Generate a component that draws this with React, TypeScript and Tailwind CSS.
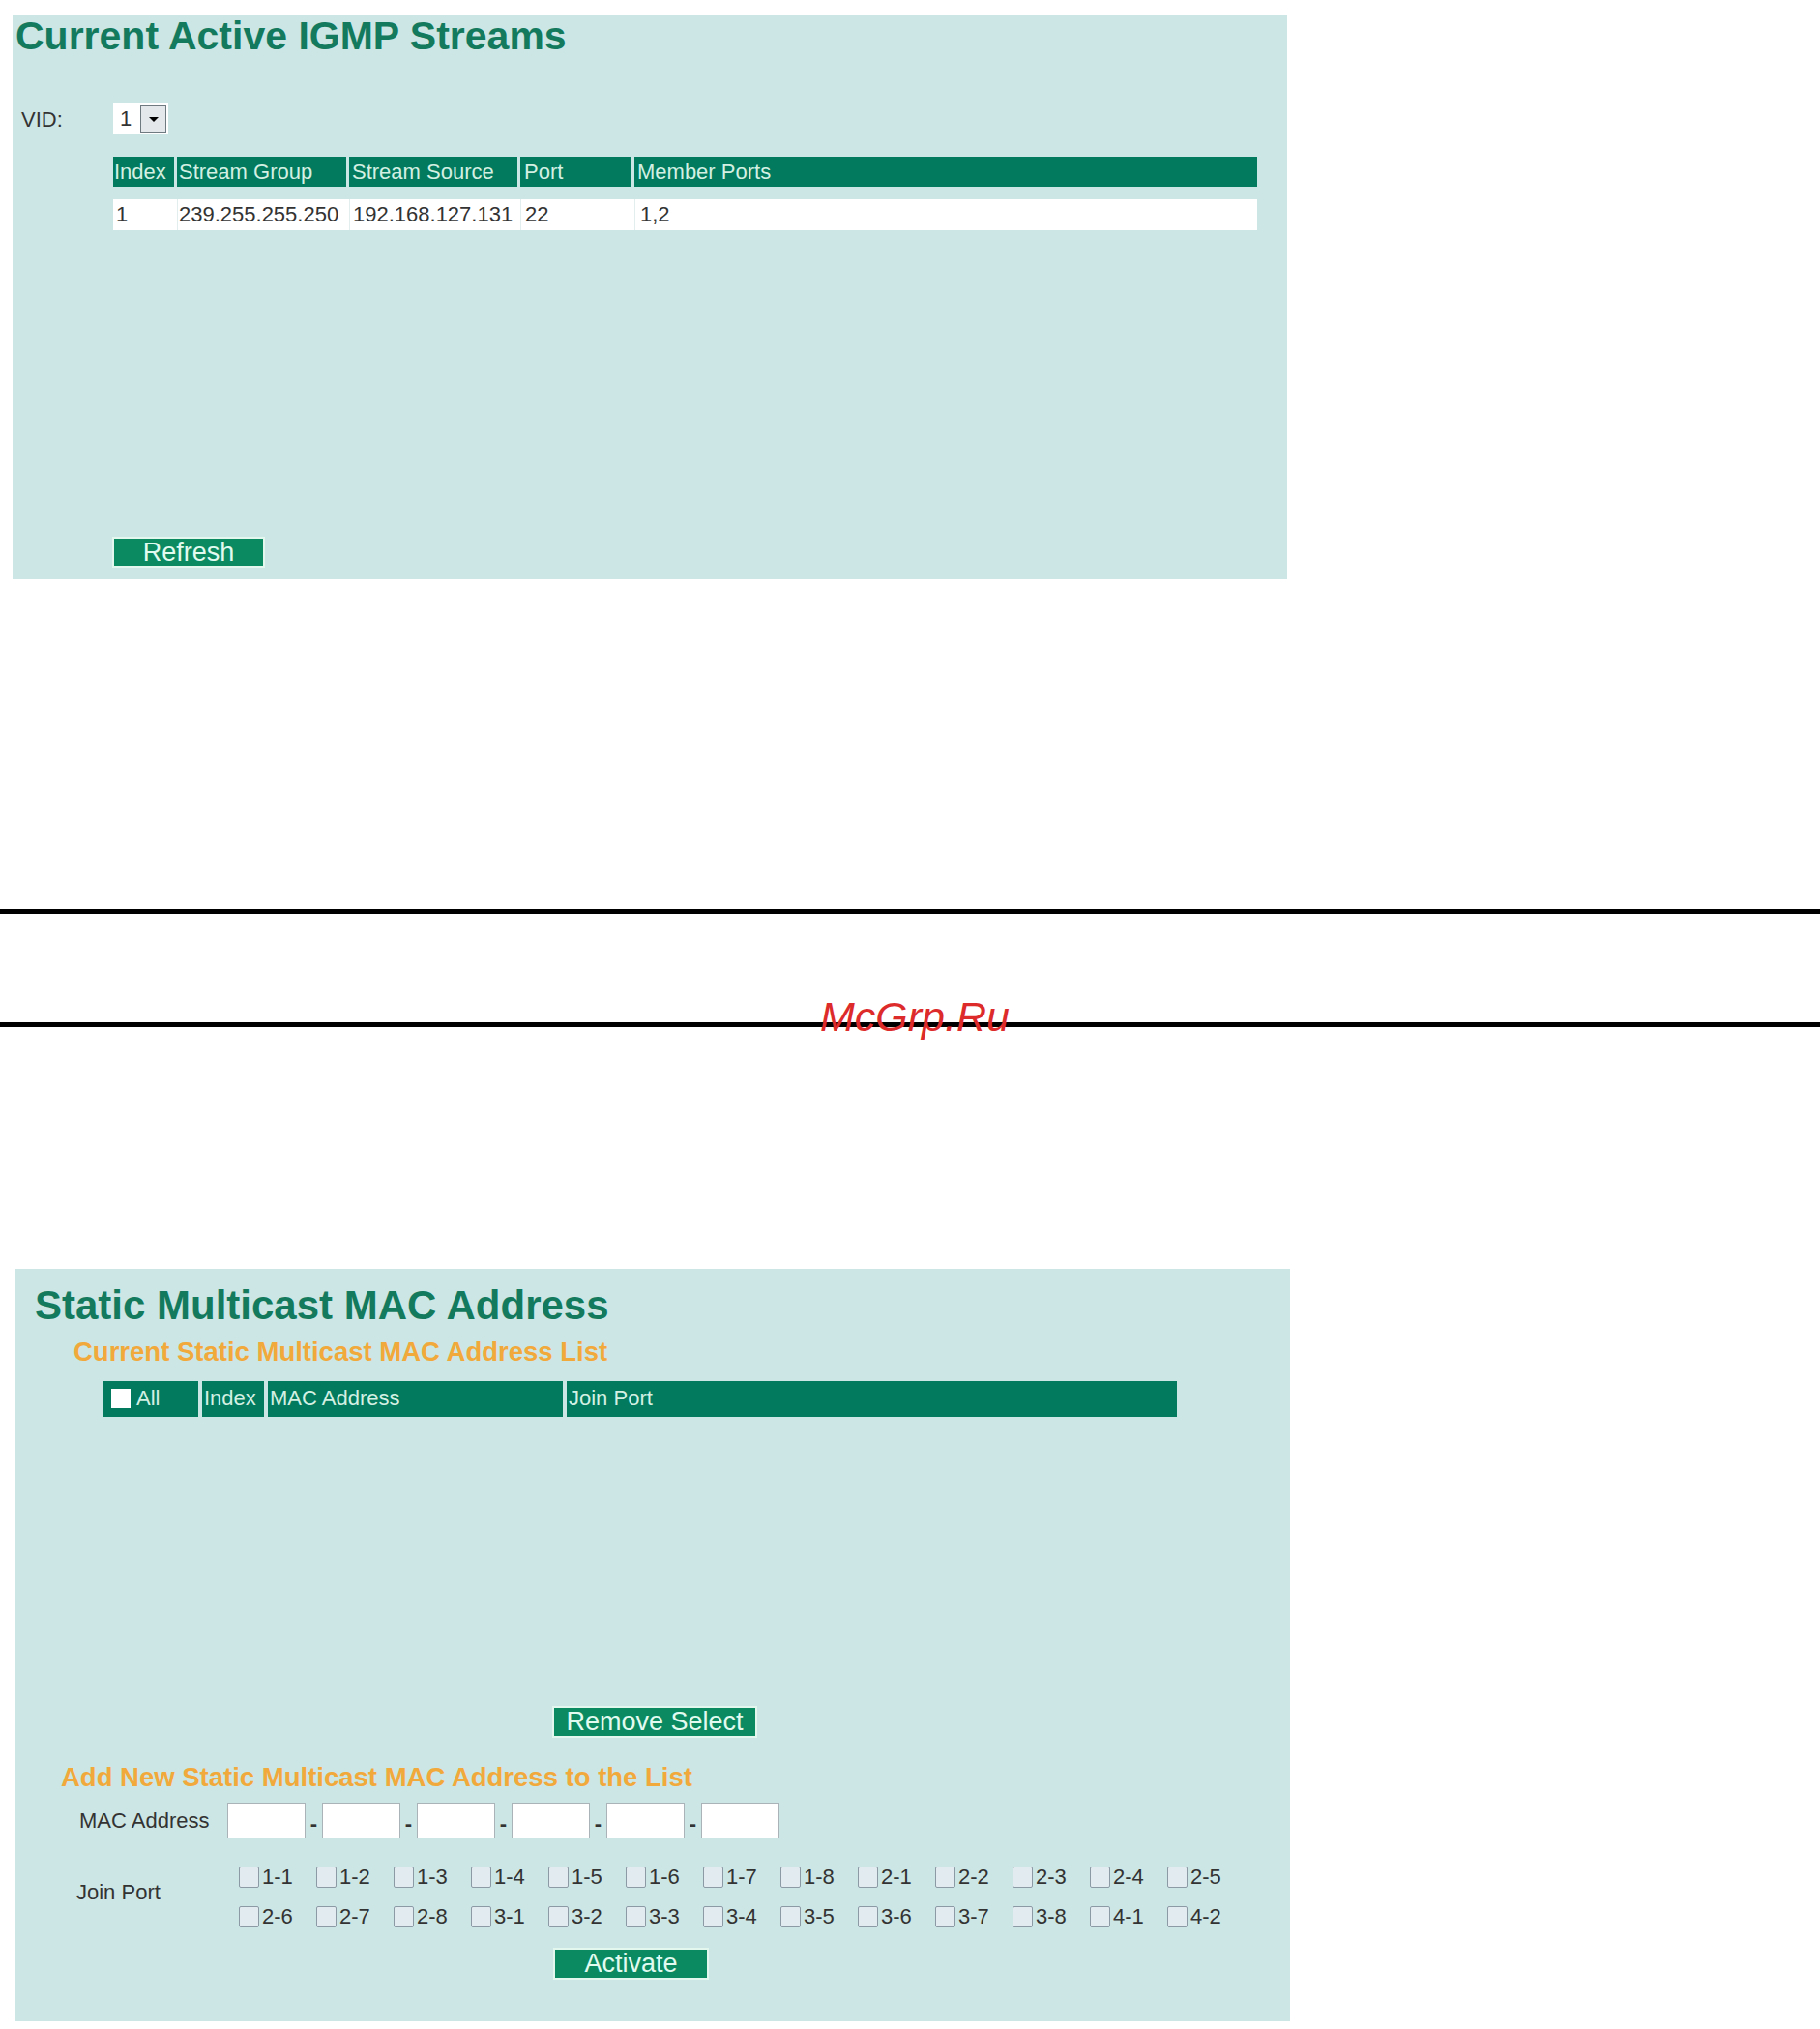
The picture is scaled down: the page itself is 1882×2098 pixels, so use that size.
const ports1 = ["1-1", "1-2", "1-3", "1-4", "1-5", "1-6", "1-7", "1-8", "2-1", "2-2", "2-3", "2-4", "2-5"];
const ports2 = ["2-6", "2-7", "2-8", "3-1", "3-2", "3-3", "3-4", "3-5", "3-6", "3-7", "3-8", "4-1", "4-2"];

function GreenButton({ label, className }: { label: string; className: string }) {
  return (
    <div
      className={
        "flex items-center justify-center bg-[#0b8a62] border-2 border-[#e4f7ef] text-[#e2fbf0] text-[27px] leading-none " +
        className
      }
    >
      {label}
    </div>
  );
}

function PortBox({ name }: { name: string }) {
  return (
    <div className="flex w-[80px] items-center gap-[3px]">
      <div className="h-[22px] w-[21px] rounded-[2px] border border-[#8c9aa6] bg-[#e2ebef]" />
      <span className="text-[22px] leading-none text-[#333]">{name}</span>
    </div>
  );
}

export default function App() {
  return (
    <div className="relative h-[2098px] w-[1882px] overflow-hidden bg-white font-['Liberation_Sans',Arial,sans-serif]">
      {/* Current Active IGMP Streams */}
      <div className="ml-[13px] mt-[15px] flex h-[584px] w-[1318px] flex-col bg-[#cce6e5]">
        <h1 className="ml-[3px] mt-[2px] text-[41px] font-bold leading-none text-[#137a5e]">
          Current Active IGMP Streams
        </h1>
        <div className="mt-[49px] flex h-[32px] items-center">
          <span className="w-[104px] pl-[9px] text-[22px] text-[#333]">VID:</span>
          <div className="flex h-[32px] w-[57px] items-center bg-white">
            <span className="w-[28px] pl-[7px] text-[22px] leading-none text-[#333]">1</span>
            <div className="flex h-[29px] w-[27px] items-center justify-center border border-[#6f7a80] bg-[#e4e8ea]">
              <div className="h-0 w-0 border-x-[5px] border-t-[5px] border-x-transparent border-t-black" />
            </div>
          </div>
        </div>
        <div className="ml-[104px] mt-[23px] w-[1183px] text-[22px] leading-none">
          <div className="flex h-[31px] gap-[3px] text-[#d3f0e3]">
            <div className="flex w-[63px] items-center bg-[#027a5d] pl-[1px]">Index</div>
            <div className="flex w-[175px] items-center bg-[#027a5d] pl-[2px]">Stream Group</div>
            <div className="flex w-[174px] items-center bg-[#027a5d] pl-[3px]">Stream Source</div>
            <div className="flex w-[115px] items-center bg-[#027a5d] pl-[4px]">Port</div>
            <div className="flex flex-1 items-center bg-[#027a5d] pl-[3px]">Member Ports</div>
          </div>
          <div className="mt-[13px] flex h-[32px] bg-white text-[#333]">
            <div className="flex w-[66px] items-center pl-[3px]">1</div>
            <div className="flex w-[178px] items-center border-l border-[#e2eeee] pl-[1px]">239.255.255.250</div>
            <div className="flex w-[177px] items-center border-l border-[#e2eeee] pl-[3px]">192.168.127.131</div>
            <div className="flex w-[118px] items-center border-l border-[#e2eeee] pl-[4px]">22</div>
            <div className="flex flex-1 items-center border-l border-[#e2eeee] pl-[5px]">1,2</div>
          </div>
        </div>
        <GreenButton label="Refresh" className="ml-[103px] mt-[317px] h-[32px] w-[158px]" />
      </div>

      {/* separator lines */}
      <div className="mt-[341px] h-[5px] w-full bg-black" />
      <div className="mt-[112px] h-[5px] w-full bg-black" />
      <span className="absolute left-[848px] top-[1030px] text-[43px] italic leading-none text-[#dd2a2a]">
        McGrp.Ru
      </span>

      {/* Static Multicast MAC Address */}
      <div className="ml-[16px] mt-[250px] flex h-[778px] w-[1318px] flex-col bg-[#cce6e5]">
        <h1 className="ml-[20px] mt-[17px] text-[42px] font-bold leading-none text-[#137a5e]">
          Static Multicast MAC Address
        </h1>
        <h2 className="ml-[60px] mt-[13px] text-[27.5px] font-bold leading-none text-[#f2a93b]">
          Current Static Multicast MAC Address List
        </h2>
        <div className="ml-[91px] mt-[16px] flex h-[37px] w-[1110px] gap-[4px] text-[22px] leading-none text-[#d3f0e3]">
          <div className="flex w-[98px] items-center gap-[6px] bg-[#027a5d] pl-[8px]">
            <div className="h-[20px] w-[20px] bg-white" />
            <span>All</span>
          </div>
          <div className="flex w-[64px] items-center bg-[#027a5d] pl-[2px]">Index</div>
          <div className="flex w-[305px] items-center bg-[#027a5d] pl-[2px]">MAC Address</div>
          <div className="flex flex-1 items-center bg-[#027a5d] pl-[2px]">Join Port</div>
        </div>
        <GreenButton label="Remove Select" className="ml-[555px] mt-[299px] h-[33px] w-[212px]" />
        <h2 className="ml-[47px] mt-[27px] text-[27.5px] font-bold leading-none text-[#f2a93b]">
          Add New Static Multicast MAC Address to the List
        </h2>
        <div className="ml-[66px] mt-[13px] flex h-[37px] items-center">
          <span className="w-[153px] text-[22px] text-[#333]">MAC Address</span>
          {[0, 1, 2, 3, 4, 5].map((i) => (
            <div key={i} className="flex items-center">
              <div className="h-[37px] w-[81px] border border-[#a9b3b8] bg-white" />
              {i < 5 && (
                <span className="flex w-[17px] justify-center pt-[6px] text-[22px] font-bold leading-none text-[#333]">
                  -
                </span>
              )}
            </div>
          ))}
        </div>
        <div className="ml-[63px] mt-[28px] flex items-center">
          <span className="w-[168px] pb-[10px] text-[22px] text-[#333]">Join Port</span>
          <div className="flex flex-col gap-[17px]">
            <div className="flex h-[24px]">
              {ports1.map((p) => (
                <PortBox key={p} name={p} />
              ))}
            </div>
            <div className="flex h-[24px]">
              {ports2.map((p) => (
                <PortBox key={p} name={p} />
              ))}
            </div>
          </div>
        </div>
        <GreenButton label="Activate" className="ml-[556px] mt-[20px] h-[33px] w-[161px]" />
      </div>
    </div>
  );
}
